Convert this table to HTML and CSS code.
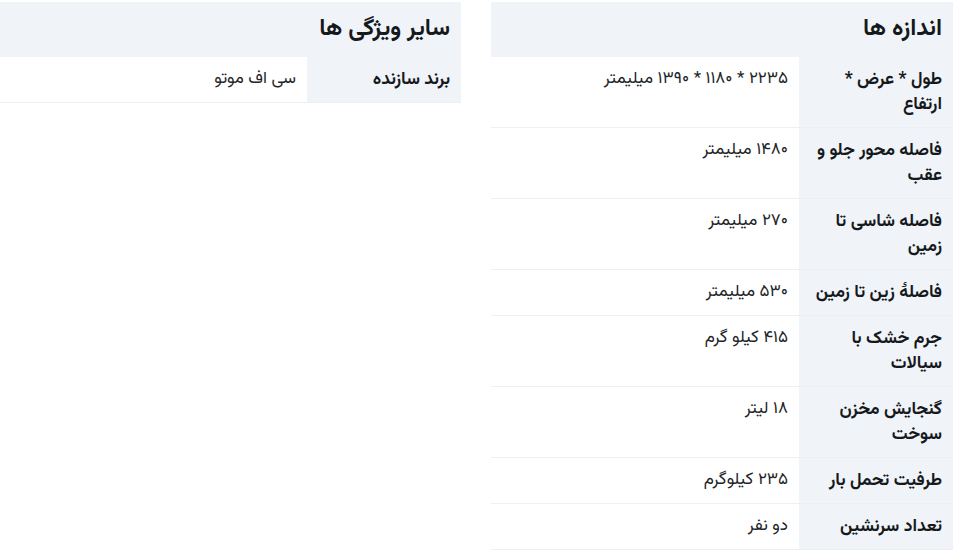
FILE: index.html
```html
<!DOCTYPE html>
<html lang="fa" dir="rtl">
<head>
<meta charset="utf-8">
<title>مشخصات</title>
<link rel="stylesheet" href="styles.css">
</head>
<body>
<div class="page">
  <section class="spec">
    <h3 class="spec-title">اندازه ها</h3>
    <table class="spec-table">
      <tr><th>طول * عرض * ارتفاع</th><td>۲۲۳۵ * ۱۱۸۰ * ۱۳۹۰ میلیمتر</td></tr>
      <tr><th>فاصله محور جلو و عقب</th><td>۱۴۸۰ میلیمتر</td></tr>
      <tr><th>فاصله شاسی تا زمین</th><td>۲۷۰ میلیمتر</td></tr>
      <tr><th>فاصلهٔ زین تا زمین</th><td>۵۳۰ میلیمتر</td></tr>
      <tr><th>جرم خشک با سیالات</th><td>۴۱۵ کیلو گرم</td></tr>
      <tr><th>گنجایش مخزن سوخت</th><td>۱۸ لیتر</td></tr>
      <tr><th>طرفیت تحمل بار</th><td>۲۳۵ کیلوگرم</td></tr>
      <tr><th>تعداد سرنشین</th><td>دو نفر</td></tr>
    </table>
  </section>
  <section class="spec">
    <h3 class="spec-title">سایر ویژگی ها</h3>
    <table class="spec-table">
      <tr><th>برند سازنده</th><td>سی اف موتو</td></tr>
    </table>
  </section>
</div>
</body>
</html>
```
FILE: styles.css
```css
html, body {
  margin: 0;
  padding: 0;
  background: #ffffff;
}
body {
  direction: rtl;
  font-family: "Vazirmatn", "Noto Sans Arabic", "DejaVu Sans", sans-serif;
  color: #212529;
  overflow: hidden;
}
.page {
  display: flex;
  gap: 30px;
  padding: 2px 9px 0 0;
  width: 962px;
  box-sizing: border-box;
}
.spec {
  flex: 0 0 462px;
  width: 462px;
}
.spec-title {
  margin: 0;
  height: 55px;
  box-sizing: border-box;
  padding: 0 11px;
  display: flex;
  align-items: center;
  background: #f0f4f9;
  font-size: 23.5px;
  font-weight: 700;
  color: #16191c;
}
.spec-table {
  width: 100%;
  border-collapse: collapse;
  table-layout: fixed;
}
.spec-table th {
  width: 154px;
  background: #f0f4f9;
  text-align: right;
  vertical-align: top;
  font-weight: 700;
  font-size: 17.5px;
  line-height: 25px;
  padding: 10px 11px 10px 9px;
  color: #16191c;
  border-bottom: 1px solid #eceff3;
  box-sizing: border-box;
}
.spec-table td {
  text-align: right;
  vertical-align: top;
  font-size: 17px;
  line-height: 25px;
  padding: 10px 11px 10px;
  color: #212529;
  border-bottom: 1px solid #eceff3;
}
```
